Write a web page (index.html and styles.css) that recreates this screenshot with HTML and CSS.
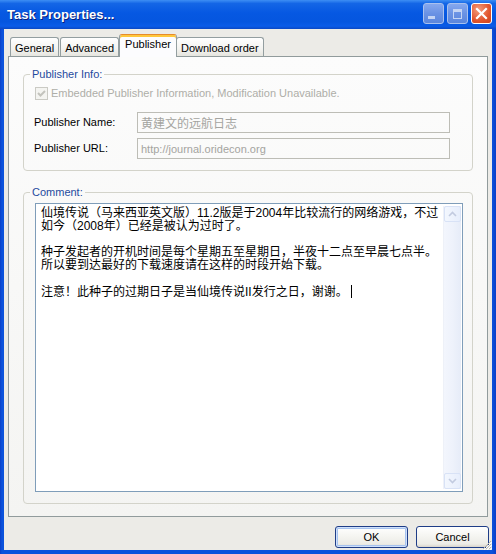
FILE: index.html
```html
<!DOCTYPE html>
<html>
<head>
<meta charset="utf-8">
<title>Task Properties...</title>
<link rel="stylesheet" href="styles.css">
</head>
<body>
<div class="window">
  <div class="titlebar">
    <span class="title">Task Properties...</span>
    <div class="caption-buttons">
      <span class="cbtn cbtn-faded"><span class="glyph-min"></span></span>
      <span class="cbtn cbtn-faded"><span class="glyph-max"></span></span>
      <span class="cbtn cbtn-close">
        <svg width="13" height="13" viewBox="0 0 13 13"><path d="M2 2 L11 11 M11 2 L2 11" stroke="#fff" stroke-width="2.2" stroke-linecap="square"/></svg>
      </span>
    </div>
  </div>
  <div class="client">
    <div class="tabs">
      <span class="tab">General</span>
      <span class="tab">Advanced</span>
      <span class="tab tab-active">Publisher</span>
      <span class="tab">Download order</span>
    </div>
    <div class="pane">
      <fieldset class="group">
        <legend>Publisher Info:</legend>
        <div class="check-row">
          <span class="checkbox">
            <svg width="11" height="11" viewBox="0 0 11 11"><path d="M2 5 L4.5 7.5 L9 3" fill="none" stroke="#c3c3bd" stroke-width="2"/></svg>
          </span>
          <span class="disabled-text">Embedded Publisher Information, Modification Unavailable.</span>
        </div>
        <div class="fields">
          <span class="field-label">Publisher Name:</span>
          <span class="input cjk">黄建文的远航日志</span>
          <span class="field-label">Publisher URL:</span>
          <span class="input">http://journal.oridecon.org</span>
        </div>
      </fieldset>
      <fieldset class="group group-comment">
        <legend>Comment:</legend>
        <div class="textarea">
          <div class="textarea-text">仙境传说（马来西亚英文版）11.2版是于2004年比较流行的网络游戏，不过<br>如今（2008年）已经是被认为过时了。<br><br>种子发起者的开机时间是每个星期五至星期日，半夜十二点至早晨七点半。<br>所以要到达最好的下载速度请在这样的时段开始下载。<br><br>注意！此种子的过期日子是当仙境传说II发行之日，谢谢。<span class="caret"></span></div>
          <div class="scrollbar">
            <span class="sb-btn">
              <svg width="9" height="6" viewBox="0 0 9 6"><path d="M1 5 L4.5 1.5 L8 5" fill="none" stroke="#c2cbe0" stroke-width="1.6"/></svg>
            </span>
            <span class="sb-track"></span>
            <span class="sb-btn">
              <svg width="9" height="6" viewBox="0 0 9 6"><path d="M1 1 L4.5 4.5 L8 1" fill="none" stroke="#c2cbe0" stroke-width="1.6"/></svg>
            </span>
          </div>
        </div>
      </fieldset>
    </div>
    <div class="actions">
      <span class="button button-default">OK</span>
      <span class="button">Cancel</span>
    </div>
    <span class="grip">
      <svg width="12" height="12" viewBox="0 0 12 12">
        <path d="M11 3 L3 11 M11 6 L6 11 M11 9 L9 11" stroke="#b9b7ae" stroke-width="1"/>
        <path d="M12 4 L4 12 M12 7 L7 12 M12 10 L10 12" stroke="#ffffff" stroke-width="1"/>
      </svg>
    </span>
  </div>
</div>
</body>
</html>
```

FILE: styles.css
```css
html, body {
  margin: 0;
  padding: 0;
  background: #ffffff;
}

body {
  font-family: "Liberation Sans", Tahoma, Arial, sans-serif;
  font-size: 11px;
  color: #000000;
}

.window {
  width: 496px;
  height: 554px;
  display: flex;
  flex-direction: column;
  background: linear-gradient(to right, #0a3fc8, #0b52dc 2px, #0b52dc 492px, #0a3fc8);
}

.titlebar {
  height: 29px;
  flex: none;
  display: flex;
  align-items: center;
  justify-content: space-between;
  padding: 0 4px 0 7px;
  background: linear-gradient(to bottom, #3d8ef4 0%, #1466e6 12%, #0658e2 45%, #0556df 75%, #0a5ce8 90%, #0a48c4 100%);
}

.title {
  color: #ffffff;
  font-weight: bold;
  font-size: 13px;
  text-shadow: 1px 1px 0 #0a1f7a;
}

.caption-buttons {
  display: flex;
  gap: 3px;
  margin-top: -2px;
}

.cbtn {
  width: 19px;
  height: 19px;
  border-radius: 3px;
  display: flex;
  align-items: center;
  justify-content: center;
}

.cbtn-faded {
  border: 1px solid #a9c1ee;
  background: linear-gradient(to bottom, #86a8ee, #6a92e4 50%, #5c86dc);
}

.cbtn-close {
  border: 1px solid #ffffff;
  background: radial-gradient(circle at 35% 30%, #f49c7c, #e1552d 60%, #cc4420);
}

.glyph-min {
  width: 7px;
  height: 3px;
  background: #c4d4f4;
  align-self: flex-end;
  margin: 0 5px 4px 0;
}

.glyph-max {
  width: 7px;
  height: 6px;
  border: 1px solid #c4d4f4;
  border-top-width: 3px;
}

.client {
  flex: 1;
  margin: 0 4px 4px;
  background: #ecebe7;
  display: flex;
  flex-direction: column;
  position: relative;
}

.tabs {
  height: 27px;
  flex: none;
  box-sizing: border-box;
  display: flex;
  align-items: flex-end;
  padding: 5px 0 0 6px;
}

.tab {
  height: 19px;
  box-sizing: border-box;
  border: 1px solid #939ea0;
  border-bottom: none;
  border-radius: 3px 3px 0 0;
  background: linear-gradient(to bottom, #ffffff, #f3f3f0 60%, #e6e5df);
  padding: 2px 4px 0;
  margin-right: 1px;
  display: flex;
  align-items: center;
  line-height: 13px;
}

.tab-active {
  height: 23px;
  margin: 0 -1px -1px -1px;
  padding: 0 5px 3px;
  border-top: 1px solid #e68b2c;
  box-shadow: inset 0 2px 0 #ffc83c;
  background: #fcfcfe;
  position: relative;
  z-index: 1;
}

.pane {
  height: 461px;
  flex: none;
  box-sizing: border-box;
  margin: 0 4px;
  border: 1px solid #919b9c;
  background: linear-gradient(to bottom, #fcfcfc, #f4f4f2);
  padding: 11px 14px 0;
  display: flex;
  flex-direction: column;
}

.group {
  margin: 0;
  padding: 0 10px 11px;
  border: 1px solid #d3d3ca;
  border-radius: 4px;
  min-width: 0;
}

.group legend {
  padding: 0 2px;
  margin-left: -4px;
  color: #1f4a9e;
  line-height: 13px;
}

.check-row {
  display: flex;
  align-items: center;
  height: 13px;
  margin-top: 6px;
  gap: 3px;
}

.checkbox {
  width: 11px;
  height: 11px;
  margin-left: 1px;
  border: 1px solid #cacac4;
  background: #f4f4f1;
  display: flex;
}

.disabled-text {
  color: #aeaea8;
  line-height: 13px;
}

.fields {
  display: grid;
  grid-template-columns: 103px 313px;
  grid-auto-rows: 21px;
  row-gap: 5px;
  margin-top: 12px;
  align-items: center;
}

.field-label {
  line-height: 13px;
}

.input {
  height: 21px;
  box-sizing: border-box;
  border: 1px solid #bdbdb6;
  color: #a4a4a0;
  padding: 0 3px;
  display: flex;
  align-items: center;
  white-space: nowrap;
}

.cjk {
  font-family: "Noto Sans CJK SC", sans-serif;
  font-size: 12px;
}

.group-comment {
  margin-top: 15px;
}

.textarea {
  margin: 4px 0 0 1px;
  width: 428px;
  height: 289px;
  box-sizing: border-box;
  border: 1px solid #7f9db9;
  background: #ffffff;
  display: flex;
}

.textarea-text {
  flex: 1;
  padding: 3px 0 0 5px;
  font-family: "Liberation Sans", "Noto Sans CJK SC", sans-serif;
  font-size: 12px;
  line-height: 13px;
  color: #000000;
}

.caret {
  display: inline-block;
  width: 1px;
  height: 13px;
  background: #000000;
  margin-left: 3px;
  vertical-align: -2px;
}

.scrollbar {
  width: 17px;
  margin: 2px 1px 2px 0;
  display: flex;
  flex-direction: column;
  background: linear-gradient(to right, #f3f6fd, #eef2fb 50%, #e6ecf8);
  border-left: 1px solid #eef1f8;
}

.sb-btn {
  height: 16px;
  flex: none;
  box-sizing: border-box;
  border: 1px solid #d8e2f6;
  border-radius: 2px;
  background: linear-gradient(to right, #f3f7fe, #e7eefc);
  display: flex;
  align-items: center;
  justify-content: center;
}

.sb-track {
  flex: 1;
}

.actions {
  display: flex;
  justify-content: flex-end;
  gap: 8px;
  margin-top: 9px;
  padding-right: 3px;
}

.button {
  width: 73px;
  height: 22px;
  box-sizing: border-box;
  border: 1px solid #1f3d87;
  border-radius: 3px;
  background: linear-gradient(to bottom, #ffffff, #f4f4f0 50%, #ecebe6 85%, #d8d4cb);
  display: flex;
  align-items: center;
  justify-content: center;
}

.button-default {
  box-shadow: inset 0 0 0 1px #cfe0fb, inset 0 0 0 2px #a6c2ef;
}

.grip {
  position: absolute;
  right: 0;
  bottom: 0;
  width: 12px;
  height: 12px;
  display: flex;
}
```
